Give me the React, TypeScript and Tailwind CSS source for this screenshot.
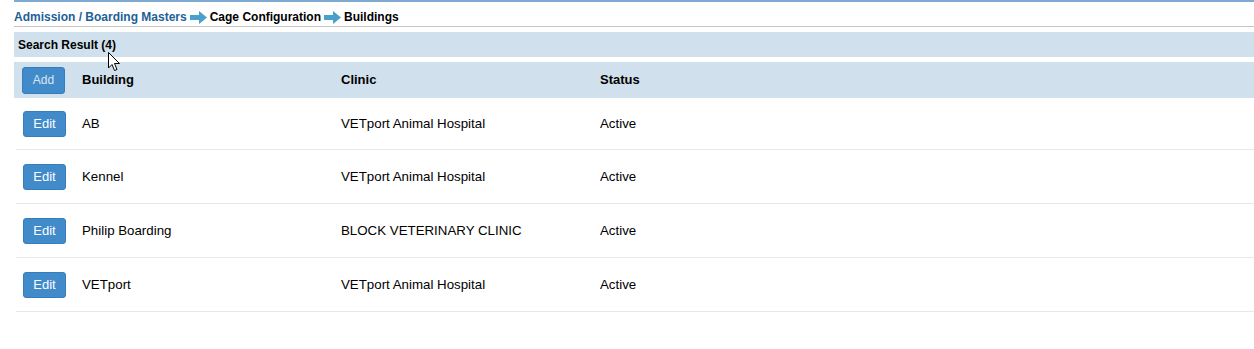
import React from "react";

const rows = [
  { b: "AB", c: "VETport Animal Hospital", s: "Active" },
  { b: "Kennel", c: "VETport Animal Hospital", s: "Active" },
  { b: "Philip Boarding", c: "BLOCK VETERINARY CLINIC", s: "Active" },
  { b: "VETport", c: "VETport Animal Hospital", s: "Active" },
];

function Arrow() {
  return (
    <svg width="17" height="13" viewBox="0 0 17 13" className="mx-[3px]">
      <path d="M0 4 H9 V0 L17 6.5 L9 13 V9 H0 Z" fill="#4b9fcb" />
    </svg>
  );
}

export default function App() {
  return (
    <div className="relative w-[1254px] h-[349px] bg-white pl-[14px] font-['Liberation_Sans',Arial,sans-serif] text-black">
      <div className="border-t-2 border-[#7eaad2]" />
      <div className="h-[25px] flex items-center border-b border-[#c6c6c6] text-[12px] font-bold pt-[6px]">
        <span className="text-[#1d5f97]">Admission / Boarding Masters</span>
        <Arrow />
        <span>Cage Configuration</span>
        <Arrow />
        <span>Buildings</span>
      </div>
      <div className="mt-[5px] h-[25px] bg-[#d0e0ec] flex items-center pl-[4px] text-[12px] font-bold">
        Search Result (4)
      </div>
      <div className="mt-[5px] h-[36px] bg-[#d0e0ec] flex items-center text-[13px] font-bold">
        <div className="w-[68px] pl-[8px]">
          <button className="w-[43px] h-[27px] rounded-[3px] bg-[#428bca] border border-[#357ebd] text-[12px] font-normal text-[#dbe6f1]">
            Add
          </button>
        </div>
        <div className="w-[259px]">Building</div>
        <div className="w-[259px]">Clinic</div>
        <div>Status</div>
      </div>
      <div className="ml-[2px]">
        {rows.map((r, i) => (
          <div
            key={i}
            className={`flex items-center border-b border-[#e8e8e8] text-[13.3px] ${i === 0 ? "h-[52px]" : "h-[54px]"}`}
          >
            <div className="w-[66px] pl-[7px]">
              <button className="w-[43px] h-[26px] rounded-[3px] bg-[#428bca] border border-[#357ebd] text-[13px] text-white">
                Edit
              </button>
            </div>
            <div className="w-[259px]">{r.b}</div>
            <div className="w-[259px]">{r.c}</div>
            <div>{r.s}</div>
          </div>
        ))}
      </div>
      <svg
        className="absolute left-[108px] top-[52px]"
        width="13"
        height="20"
        viewBox="0 0 13 20"
      >
        <path
          d="M0.5 0.5 L0.5 16 L4 12.5 L6.5 18.5 L9 17.5 L6.5 11.5 L11.5 11.5 Z"
          fill="white"
          stroke="black"
          strokeWidth="1"
        />
      </svg>
    </div>
  );
}
